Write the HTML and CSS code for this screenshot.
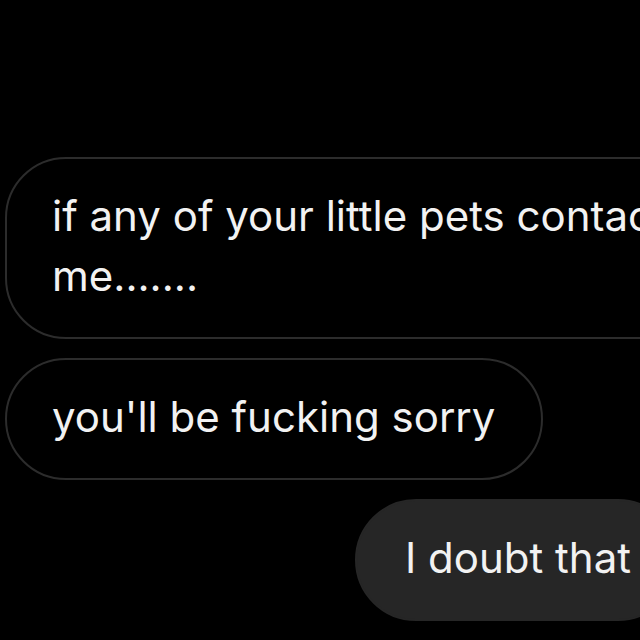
FILE: index.html
```html
<!DOCTYPE html>
<html lang="en">
    <head>
        <title>Direct messages</title>
        <meta charset="utf-8" />
        <link rel="stylesheet" href="styles.css">
    </head>
    <body>
        <div class="thread">
            <div class="bubble received">if any of your little pets contact<br>me.......</div>
            <div class="bubble received">you'll be fucking sorry</div>
            <div class="bubble sent">I doubt that</div>
        </div>
    </body>
</html>
```

FILE: styles.css
```css
html, body {
    margin: 0;
    padding: 0;
    height: 100%;
    overflow: hidden;
    background-color: #000;
}

/* message list */
.thread {
    width: 674px;
    padding: 157px 0 0 5px;
    display: flex;
    flex-direction: column;
    align-items: flex-start;
    gap: 19px;
    font-family: Inter, "Liberation Sans", sans-serif;
    font-size: 42px;
    line-height: 60px;
    color: #f2f2f2;
}

.bubble {
    white-space: nowrap;
    padding: 27px 46px 31px 45px;
    border-radius: 61px;
}
.received {
    border: 2px solid #2c2c2c;
}
.sent {
    align-self: flex-end;
    padding-left: 48px;
    border: 2px solid #262626;
    background-color: #262626;
}
```
